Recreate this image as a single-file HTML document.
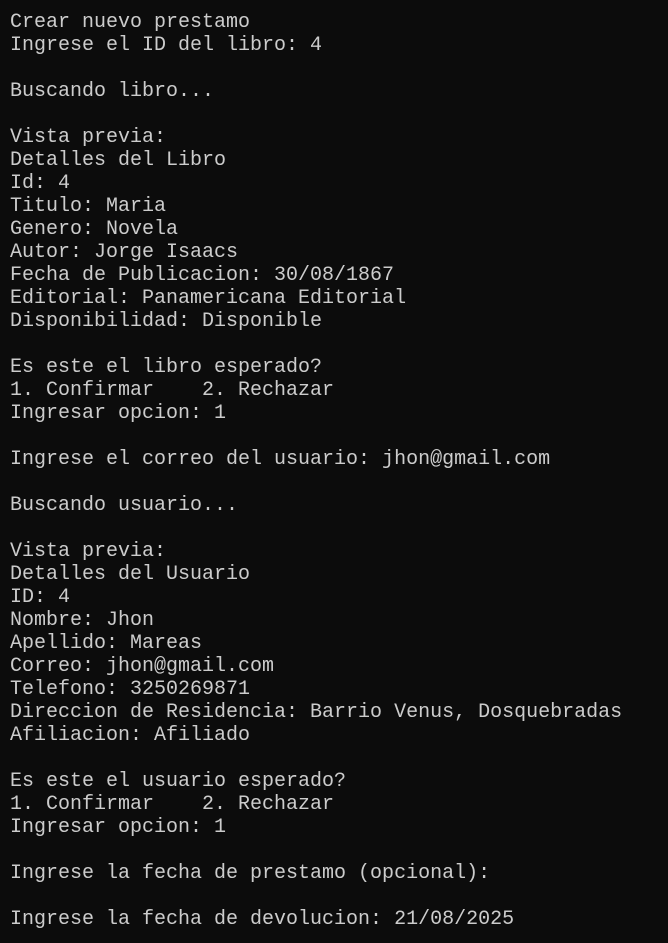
<!DOCTYPE html>
<html><head><meta charset="utf-8"><style>
html,body{margin:0;padding:0;background:#0c0c0c;width:668px;height:943px;overflow:hidden}
pre{margin:0;padding:11px 0 0 10px;font-family:"Liberation Mono","DejaVu Sans Mono",monospace;font-size:20px;line-height:23px;color:#cccccc;white-space:pre}
</style></head><body><pre>Crear nuevo prestamo
Ingrese el ID del libro: 4

Buscando libro...

Vista previa:
Detalles del Libro
Id: 4
Titulo: Maria
Genero: Novela
Autor: Jorge Isaacs
Fecha de Publicacion: 30/08/1867
Editorial: Panamericana Editorial
Disponibilidad: Disponible

Es este el libro esperado?
1. Confirmar    2. Rechazar
Ingresar opcion: 1

Ingrese el correo del usuario: jhon@gmail.com

Buscando usuario...

Vista previa:
Detalles del Usuario
ID: 4
Nombre: Jhon
Apellido: Mareas
Correo: jhon@gmail.com
Telefono: 3250269871
Direccion de Residencia: Barrio Venus, Dosquebradas
Afiliacion: Afiliado

Es este el usuario esperado?
1. Confirmar    2. Rechazar
Ingresar opcion: 1

Ingrese la fecha de prestamo (opcional):

Ingrese la fecha de devolucion: 21/08/2025</pre></body></html>
